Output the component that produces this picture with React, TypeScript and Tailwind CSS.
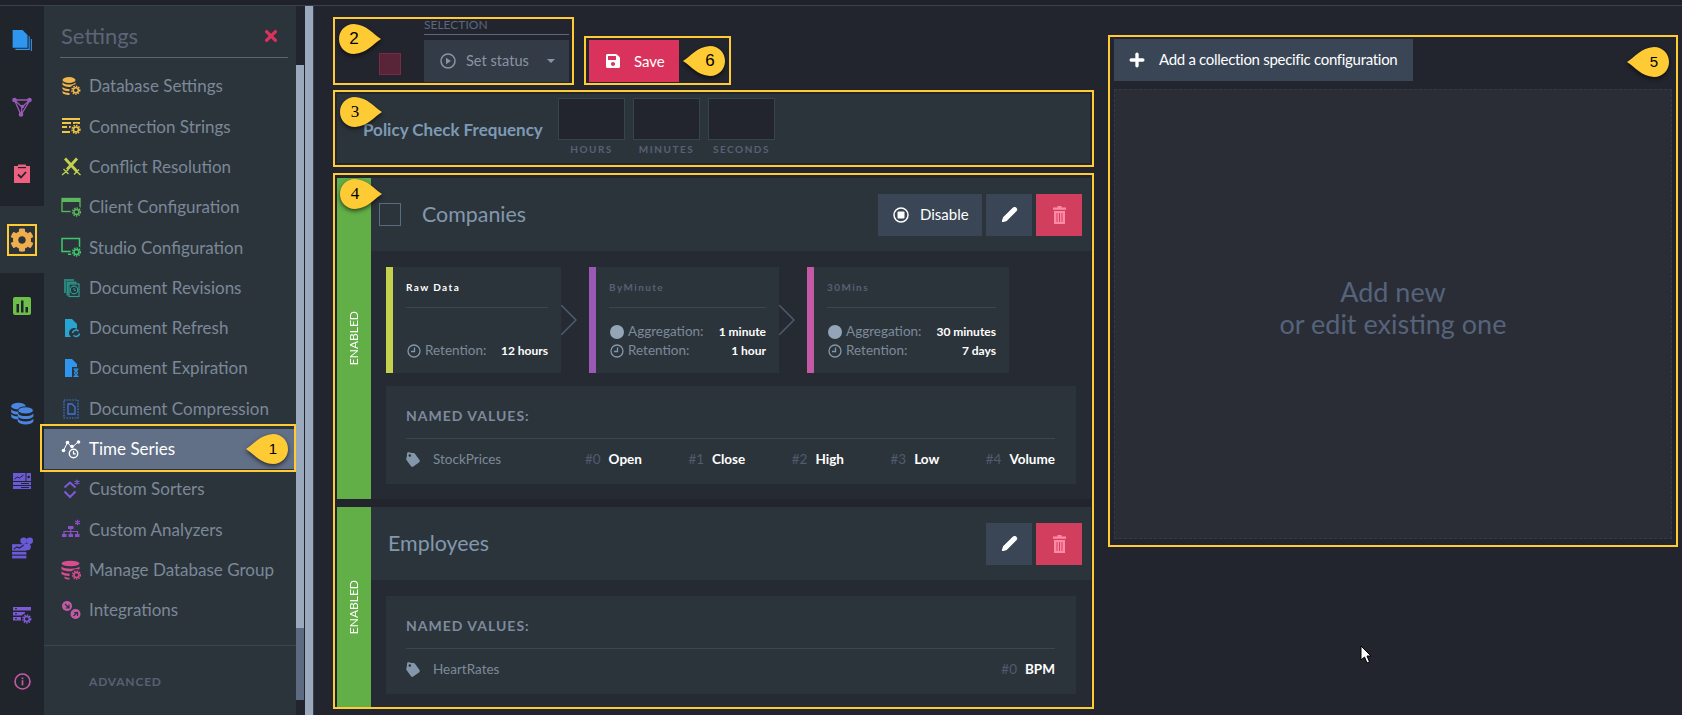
import React from 'react';
import { Plus, Pencil } from 'lucide-react';
import { FaCog, FaSave, FaTag, FaTimes } from 'react-icons/fa';

type IconProps = { className?: string };

// tiny gear used on the corner of several menu icons
const Gear = ({ x, y, cut = '#2c343b' }: { x: number; y: number; cut?: string }) => (
  <g>
    <circle cx={x} cy={y} r={6} fill={cut} />
    <circle cx={x} cy={y} r={3.9} fill="none" stroke="currentColor" strokeWidth={1.5} strokeDasharray="1.5 1.06" />
    <circle cx={x} cy={y} r={2.5} fill="none" stroke="currentColor" strokeWidth={1.5} />
  </g>
);

const Svg = ({ className, children, size = 20 }: IconProps & { children: React.ReactNode; size?: number }) => (
  <svg viewBox="0 0 20 20" width={size} height={size} fill="currentColor" className={className}>
    {children}
  </svg>
);

const DbSettingsIcon = ({ className }: IconProps) => (
  <Svg className={className}>
    <ellipse cx="8" cy="4" rx="6.5" ry="3" />
    <path d="M1.5 6.2c1 1.6 3.5 2.4 6.5 2.4s5.500-.8 6.500-2.400v2.600c-1 1.300-3.500 2.200-6.500 2.200S2.500 10 1.500 8.800z" />
    <path d="M1.500 11c1.400 1.400 4 2 7 2v2.300c-3.300 0-5.800-.8-7-2.200zM1.500 14.900c1.400 1.300 4 1.900 7 2V19c-3.500 0-7-1-7-2.500z" />
    <Gear x={14.8} y={14.2} />
  </Svg>
);
const ConnectionIcon = ({ className }: IconProps) => (
  <Svg className={className}>
    <rect x="1" y="2" width="18" height="2" />
    <rect x="1" y="6" width="9" height="2" />
    <rect x="12" y="6" width="7" height="2" />
    <rect x="1" y="10" width="5" height="2" />
    <rect x="8" y="10" width="3" height="2" />
    <rect x="1" y="15" width="8" height="2" />
    <Gear x={15} y={13.500} />
  </Svg>
);
const ConflictIcon = ({ className }: IconProps) => (
  <Svg className={className}>
    <path d="M4 1.500l12 13" stroke="currentColor" strokeWidth="2.800" fill="none" />
    <path d="M16 1.500L6 12.500" stroke="currentColor" strokeWidth="2.800" fill="none" />
    <path d="M1 18l6-5M2.500 12l5 5M19.500 18l-5-4.500M18 12.500l-5 5" stroke="currentColor" strokeWidth="1.300" fill="none" />
  </Svg>
);
const ClientIcon = ({ className }: IconProps) => (
  <Svg className={className}>
    <rect x="1" y="1.500" width="18" height="13" fill="none" stroke="currentColor" strokeWidth="1.300" />
    <rect x="1" y="1.500" width="18" height="3.500" />
    <Gear x={15.500} y={15} />
  </Svg>
);
const StudioIcon = ({ className }: IconProps) => (
  <Svg className={className}>
    <rect x="1" y="1.500" width="17.500" height="13" fill="none" stroke="currentColor" strokeWidth="1.500" />
    <rect x="7" y="16.500" width="5" height="1.500" />
    <Gear x={15.500} y={15} />
  </Svg>
);
const RevisionsIcon = ({ className }: IconProps) => (
  <Svg className={className}>
    <path d="M3 1h10v2H5v12H3z" opacity=".75" />
    <path d="M5.500 3.500h10v2h-8v12h-2z" opacity=".9" />
    <rect x="8" y="6" width="10" height="12.500" fill="none" stroke="currentColor" strokeWidth="1.200" />
    <circle cx="13" cy="12" r="3.800" fill="none" stroke="currentColor" strokeWidth="1.200" />
    <path d="M13 10v2.300h2" fill="none" stroke="currentColor" strokeWidth="1" />
  </Svg>
);
const RefreshIcon = ({ className }: IconProps) => (
  <Svg className={className}>
    <path d="M4 1h7l5 5v5a5 5 0 0 0-6 8H4z" />
    <path d="M11.500 15a3.500 3.500 0 0 1 6-1.800M18.500 15.500a3.500 3.500 0 0 1-6 1.800" fill="none" stroke="currentColor" strokeWidth="1.500" />
  </Svg>
);
const ExpirationIcon = ({ className }: IconProps) => (
  <Svg className={className}>
    <path d="M4 1h7l5 5v3h-5v10H4z" />
    <path d="M12.500 11h5M12.500 18.500h5M13.500 11c0 2.500 3 2.500 3 4s-3 1.500-3 3.500M16.500 11c0 2.500-3 2.500-3 4s3 1.500 3 3.500" fill="none" stroke="currentColor" strokeWidth="1.200" />
  </Svg>
);
const CompressionIcon = ({ className }: IconProps) => (
  <Svg className={className}>
    <rect x="3" y="1" width="14" height="18" fill="none" stroke="currentColor" strokeWidth="1.200" strokeDasharray="1.600 1.200" />
    <path d="M7 5h4l3 3v7H7z" fill="none" stroke="currentColor" strokeWidth="1.300" />
  </Svg>
);
const TimeSeriesIcon = ({ className }: IconProps) => (
  <Svg className={className}>
    <path d="M2.500 11.500L6.500 3.500L11 8.500L17 3" fill="none" stroke="currentColor" strokeWidth="1" />
    <circle cx="2.500" cy="11.500" r="1.800" />
    <circle cx="6.500" cy="3.500" r="1.800" />
    <circle cx="11" cy="7.500" r="1.800" />
    <circle cx="17.500" cy="3" r="1.800" />
    <circle cx="12.500" cy="14.500" r="4.200" fill="none" stroke="currentColor" strokeWidth="1.400" />
    <path d="M12.500 12v2.800h2.200" fill="none" stroke="currentColor" strokeWidth="1.200" />
  </Svg>
);
const SortersIcon = ({ className }: IconProps) => (
  <Svg className={className}>
    <path d="M3.500 8.500l5.500-5 5.500 5M3.500 12.500l5.500 5.500 5.500-5.500" fill="none" stroke="currentColor" strokeWidth="2" />
    <path d="M16 .8v5M13.600 2l4.800 2.700M13.600 4.700L18.400 2" stroke="currentColor" strokeWidth="1.200" />
  </Svg>
);
const AnalyzersIcon = ({ className }: IconProps) => (
  <Svg className={className}>
    <rect x="7" y="7" width="5.500" height="3" />
    <rect x="1" y="15" width="4.500" height="3" />
    <rect x="7.500" y="15" width="4.500" height="3" />
    <rect x="14" y="15" width="4.500" height="3" />
    <path d="M3 15v-2.500h13.500V15M9.700 10v5" fill="none" stroke="currentColor" strokeWidth="1.200" />
    <path d="M16.500 .8v5.400M14 2l5 3M14 5l5-3" stroke="currentColor" strokeWidth="1.200" />
  </Svg>
);
const GroupIcon = ({ className }: IconProps) => (
  <Svg className={className}>
    <ellipse cx="9.500" cy="3.500" rx="9" ry="2.800" />
    <path d="M.5 6.500c1.500 1.500 5 2.200 9 2.200s7.500-.7 9-2.200v2.700c-1.500 1.400-5 2.100-9 2.100s-7.500-.7-9-2.100zM.5 11.500c1.500 1.300 4 2 8 2.100v2.500c-4 0-6.500-.8-8-2zM3.500 16.500c1.400.8 3 1.200 5 1.300V19.500c-2.500 0-4.200-.5-5-1.300z" />
    <Gear x={15.500} y={15} />
  </Svg>
);
const IntegrationsIcon = ({ className }: IconProps) => (
  <Svg className={className}>
    <circle cx="6" cy="6" r="5" />
    <circle cx="14.500" cy="14" r="5" />
    <path d="M4 4l4 4M4.500 8h3.500V4.500" fill="none" stroke="#2c343b" strokeWidth="1.200" />
    <path d="M16.500 12l-4 4M16 15.500h-3.500V12" fill="none" stroke="#2c343b" strokeWidth="1.200" transform="rotate(180 14.500 14)" />
  </Svg>
);

// rail icons
const DocsIcon = ({ className }: IconProps) => (
  <Svg className={className} size={22}>
    <path d="M1.500 1h9l4.500 4.500V17H1.500z" />
    <path d="M16.500 6.500V18.500H4M18.500 9v11.500H7" fill="none" stroke="currentColor" strokeWidth="1" />
  </Svg>
);
const GraphIcon = ({ className }: IconProps) => (
  <Svg className={className} size={20}>
    <path d="M2.500 3L18 3M2.500 3L9 18M18 3L9 18M2.500 3L10 10M18 3L10 10M9 18l1-8" fill="none" stroke="currentColor" strokeWidth="1.300" />
    <circle cx="2.500" cy="3" r="2.300" />
    <circle cx="17.500" cy="3" r="2.300" />
    <circle cx="9" cy="17.500" r="2.300" />
    <circle cx="10.500" cy="9.500" r="1.800" />
  </Svg>
);
const ClipboardIcon = ({ className }: IconProps) => (
  <Svg className={className} size={20}>
    <path d="M2 3h4V1.500h8V3h4v17H2z" />
    <path d="M6 11.500l3 3 5-5.500" fill="none" stroke="#20242b" strokeWidth="1.800" />
    <rect x="6" y="4" width="8" height="1.200" fill="#20242b" />
  </Svg>
);
const ChartIcon = ({ className }: IconProps) => (
  <Svg className={className} size={20}>
    <rect x="1" y="1" width="18" height="18" rx="2" />
    <rect x="4.500" y="8" width="2.500" height="8.500" fill="#20242b" />
    <rect x="9" y="4.500" width="2.500" height="12" fill="#20242b" />
    <rect x="13.500" y="11" width="2.500" height="5.500" fill="#20242b" />
  </Svg>
);
const DatabasesIcon = ({ className }: IconProps) => (
  <Svg className={className} size={24}>
    <ellipse cx="7" cy="3.500" rx="6" ry="2.800" />
    <path d="M1 6c1 1.300 3 2 6 2v2.500c-3 0-5-.8-6-2zM1 10c1 1.300 3 2 6 2v2.500c-3 0-5-.8-6-2z" />
    <ellipse cx="13" cy="7" rx="6.500" ry="3" stroke="#20242b" strokeWidth=".8" />
    <path d="M6.500 9.500c1 1.300 3.500 2.200 6.500 2.200s5.500-.9 6.500-2.200V12c-1 1.300-3.500 2.200-6.500 2.200S7.500 13.300 6.500 12zM6.500 14c1 1.300 3.500 2.200 6.500 2.200s5.500-.9 6.500-2.200v2.500c-1 1.300-3.500 2.200-6.500 2.200s-5.500-.9-6.500-2.200z" />
  </Svg>
);
const DashboardIcon = ({ className }: IconProps) => (
  <Svg className={className} size={20}>
    <rect x="1" y="2" width="12.500" height="8" />
    <rect x="14.500" y="2" width="4.500" height="8" />
    <rect x="1" y="11" width="18" height="3" />
    <rect x="1" y="15" width="18" height="3" />
    <path d="M2.500 8l3-2 2 1 4-3" fill="none" stroke="#20242b" strokeWidth="1" />
    <circle cx="16.700" cy="6" r="1.300" fill="#20242b" />
    <rect x="9" y="12" width="8" height="1" fill="#20242b" />
    <rect x="9" y="16" width="8" height="1" fill="#20242b" />
  </Svg>
);
const ClusterIcon = ({ className }: IconProps) => (
  <Svg className={className} size={22}>
    <rect x="1" y="6.500" width="13" height="6" />
    <rect x="1" y="13.500" width="13" height="2.500" />
    <rect x="1" y="17" width="13" height="2.500" />
    <path d="M2.500 11l3-2 2 1 4-2.500" fill="none" stroke="#20242b" strokeWidth="1" />
    <circle cx="11.500" cy="3.500" r="3" />
    <circle cx="17" cy="3.500" r="3" />
    <circle cx="15" cy="9" r="3" />
  </Svg>
);
const ServerConfigIcon = ({ className }: IconProps) => (
  <Svg className={className} size={20}>
    <rect x="1" y="2" width="18" height="3.500" />
    <rect x="1" y="7" width="12" height="3.500" />
    <rect x="1" y="12" width="9" height="3.500" />
    <Gear x={14.800} y={14} cut="#20242b" />
    <rect x="3" y="3.200" width="2" height="1" fill="#20242b" />
    <rect x="3" y="8.200" width="2" height="1" fill="#20242b" />
    <rect x="3" y="13.200" width="2" height="1" fill="#20242b" />
  </Svg>
);
const InfoIcon = ({ className }: IconProps) => (
  <Svg className={className} size={17}>
    <circle cx="10" cy="10" r="8.800" fill="none" stroke="currentColor" strokeWidth="1.900" />
    <rect x="9" y="8.500" width="2" height="6" />
    <rect x="9" y="5.300" width="2" height="2" />
  </Svg>
);
const ClockIcon = () => (
  <svg viewBox="0 0 14 14" width={14} height={14} className="shrink-0 text-[#8496a9]">
    <circle cx="7" cy="7" r="6" fill="none" stroke="currentColor" strokeWidth="1.300" />
    <path d="M7.500 3.500v4H4" fill="none" stroke="currentColor" strokeWidth="1.300" />
  </svg>
);
const TrashIcon = () => (
  <svg viewBox="0 0 13 18" width={13} height={18} fill="currentColor">
    <path d="M4.500 0h4v1.500H13v2.200H0V1.500h4.500z" />
    <path d="M1 5h11v13H1zM3.500 7v9h1V7zM6 7v9h1V7zM8.500 7v9h1V7z" fillRule="evenodd" />
  </svg>
);

// numbered yellow callout laid over the screenshot
const Callout = ({ n, className, flip, numClass }: { n: number; className: string; flip?: boolean; numClass?: string }) => (
  <div className={`absolute z-20 h-[30px] w-[42px] ${className}`}>
    <svg viewBox="0 0 42 30" width={42} height={30} className={`drop-shadow-[0_2px_2px_rgba(0,0,0,0.6)] ${flip ? '-scale-x-100' : ''}`}>
      <path d="M0 15C8 10 14 1 27 0c9 0 15 7 15 15s-6 15-15 15C14 29 8 20 0 15z" fill="#fecb35" />
    </svg>
    <span className={`absolute top-0 flex h-[30px] w-[30px] items-center justify-center text-black ${flip ? 'left-0' : 'right-0'} ${numClass ?? "font-['Liberation_Sans'] text-[15px]"}`}>
      {n}
    </span>
  </div>
);

const rail = [
  { icon: DocsIcon, color: 'text-[#2f96f0]' },
  { icon: GraphIcon, color: 'text-[#9b59b6]' },
  { icon: ClipboardIcon, color: 'text-[#ee5f80]' },
];
const railBottom = [
  { icon: DatabasesIcon, color: 'text-[#4a85e0]' },
  { icon: DashboardIcon, color: 'text-[#6a5ad8]' },
  { icon: ClusterIcon, color: 'text-[#6a5ad8]' },
  { icon: ServerConfigIcon, color: 'text-[#7e5bd6]' },
  { icon: InfoIcon, color: 'text-[#c45aa6]' },
];

const menu = [
  { label: 'Database Settings', icon: DbSettingsIcon, color: 'text-[#f0b64c]' },
  { label: 'Connection Strings', icon: ConnectionIcon, color: 'text-[#f3c544]' },
  { label: 'Conflict Resolution', icon: ConflictIcon, color: 'text-[#c4d04e]' },
  { label: 'Client Configuration', icon: ClientIcon, color: 'text-[#5cb85c]' },
  { label: 'Studio Configuration', icon: StudioIcon, color: 'text-[#3fc76c]' },
  { label: 'Document Revisions', icon: RevisionsIcon, color: 'text-[#2a9d90]' },
  { label: 'Document Refresh', icon: RefreshIcon, color: 'text-[#27a5d0]' },
  { label: 'Document Expiration', icon: ExpirationIcon, color: 'text-[#2f96f0]' },
  { label: 'Document Compression', icon: CompressionIcon, color: 'text-[#3f73d8]' },
  { label: 'Time Series', icon: TimeSeriesIcon, color: 'text-white', active: true },
  { label: 'Custom Sorters', icon: SortersIcon, color: 'text-[#7e5bd6]' },
  { label: 'Custom Analyzers', icon: AnalyzersIcon, color: 'text-[#8a50c8]' },
  { label: 'Manage Database Group', icon: GroupIcon, color: 'text-[#d84d8f]' },
  { label: 'Integrations', icon: IntegrationsIcon, color: 'text-[#c45aa6]' },
];

const Sidebar = () => (
  <aside className="flex h-full w-[252px] shrink-0 flex-col bg-[#2c343b]">
    <div className="ml-4 mr-2 flex h-[52px] items-center justify-between border-b border-[#5b6577] pl-[1px] pr-2 pt-[8px]">
      <span className="text-[22px] leading-none text-[#5b6577]">Settings</span>
      <FaTimes className="h-[18px] w-[18px] text-[#d9325c]" />
    </div>
    <nav className="mt-[8px]">
      {menu.map((item) => {
        const Icon = item.icon;
        return (
          <div
            key={item.label}
            className={`flex h-[40.3px] items-center gap-2 pl-[17px] text-[17px] ${
              item.active ? 'bg-[#616f87] text-white' : 'text-[#7b8898]'
            }`}
          >
            <Icon className={`shrink-0 ${item.color}`} />
            {item.label}
          </div>
        );
      })}
    </nav>
    <div className="mt-[15px] border-t border-[#3a4553] pl-[45px] pt-[28px] text-[12px] font-bold leading-4 tracking-[0.8px] text-[#566174]">
      ADVANCED
    </div>
  </aside>
);

const Rail = () => (
  <div className="flex h-full w-[44px] shrink-0 flex-col items-center bg-[#20242b] pt-[1px]">
    {rail.map(({ icon: Icon, color }, i) => (
      <div key={i} className="flex h-[67px] w-full items-center justify-center">
        <Icon className={color} />
      </div>
    ))}
    <div className="flex h-[67px] w-full items-center justify-center bg-[#2c343b]">
      <div className="flex h-[32px] w-[30px] items-center justify-center border-2 border-[#fecb35]">
        <FaCog className="h-[24px] w-[24px] text-[#f0ad4e]" />
      </div>
    </div>
    <div className="flex h-[67px] w-full items-center justify-center">
      <ChartIcon className="text-[#6cc04a]" />
    </div>
    <div className="h-[41px]" />
    {railBottom.map(({ icon: Icon, color }, i) => (
      <div key={i} className="flex h-[67px] w-full shrink-0 items-center justify-center">
        <Icon className={color} />
      </div>
    ))}
  </div>
);

const Card = ({
  title,
  stripe,
  width,
  raw,
  aggregation,
  retention,
}: {
  title: string;
  stripe: string;
  width: string;
  raw?: boolean;
  aggregation?: string;
  retention: string;
}) => (
  <div className={`flex h-[106px] shrink-0 bg-[#2c343b] ${width}`}>
    <div className={`w-[7px] shrink-0 ${stripe}`} />
    <div className="min-w-0 flex-1 pl-[13px] pr-[13px]">
      <div
        className={`flex h-[41px] items-center border-b border-[#3c4653] text-[10px] font-bold tracking-[1.4px] ${
          raw ? 'text-white' : 'text-[#566174]'
        }`}
      >
        {title}
      </div>
      <div className="pt-[14px] text-[13.5px] text-[#7c8a9a]">
        <div className="flex h-[19px] items-center gap-1 pl-[1px]">
          {aggregation && (
            <>
              <span className="h-[14px] w-[14px] shrink-0 rounded-full bg-[#94a5b8]" />
              Aggregation:
              <span className="ml-auto text-[12px] font-bold text-white">{aggregation}</span>
            </>
          )}
        </div>
        <div className="flex h-[19px] items-center gap-1 pl-[1px]">
          <ClockIcon />
          Retention:
          <span className="ml-auto text-[12px] font-bold text-white">{retention}</span>
        </div>
      </div>
    </div>
  </div>
);

const Arrow = () => (
  <div className="flex w-[28px] shrink-0 items-center">
    <svg viewBox="0 0 16 30" width={16} height={30} fill="none" stroke="#4f5b6e" strokeWidth="1.500">
      <path d="M0 0l15 15L0 30" />
    </svg>
  </div>
);

const NamedValues = ({ series, values }: { series: string; values: string[] }) => (
  <div className="ml-[15px] mr-[15px] h-[98px] bg-[#2c343b] pl-[20px] pr-[21px]">
    <div className="flex h-[53px] items-end border-b border-[#3c4653] pb-[14px] text-[14px] font-bold leading-4 tracking-[1px] text-[#7d8a9c]">
      NAMED VALUES:
    </div>
    <div className="flex h-[41px] items-center text-[13.5px]">
      <FaTag className="h-[14px] w-[14px] rotate-[10deg] text-[#8496a9]" />
      <span className="ml-[13px] text-[#7c8a9a]">{series}</span>
      <div className="ml-auto flex gap-[46.5px]">
        {values.map((v, i) => (
          <span key={v} className="flex gap-[8px]">
            <span className="text-[#4f5b6e]">#{i}</span>
            <span className="font-bold text-white">{v}</span>
          </span>
        ))}
      </div>
    </div>
  </div>
);

const EnabledBar = () => (
  <div className="flex w-[34px] shrink-0 items-center justify-center bg-[#62ae47]">
    <span className="rotate-180 text-[12px] text-white [writing-mode:vertical-rl]">ENABLED</span>
  </div>
);

const RowActions = () => (
  <div className="ml-auto mr-[9px] flex gap-1">
    <button className="flex h-[42px] w-[46px] items-center justify-center bg-[#3a4656] text-white">
      <Pencil className="h-[17px] w-[17px]" fill="white" strokeWidth={1.500} />
    </button>
    <button className="flex h-[42px] w-[46px] items-center justify-center bg-[#d23f5e] text-[#ff8aa5]">
      <TrashIcon />
    </button>
  </div>
);

const App = () => (
  <div className="relative h-[715px] w-[1682px] overflow-hidden bg-[#22252d] font-['Lato',sans-serif]">
    <div className="flex h-[6px] border-b border-[#3a4250] bg-[#1f2229]" />
    <div className="flex h-[709px]">
      <Rail />
      <Sidebar />
      <div className="flex shrink-0 flex-col pt-[59px]">
        <div className="h-[563px] w-[8px] bg-[#9aa9bb]" />
        <div className="h-[72px] w-[8px] bg-[#5d6a80]" />
      </div>
      <div className="w-[1px] shrink-0 bg-[#22252d]" />
      <div className="w-[8px] shrink-0 bg-[#9aa9bb]" />

      <main className="flex flex-1 gap-[14px] border-l border-[#3a4250] pl-[19px] pt-[11px]">
        <div className="w-[761px] shrink-0">
          <div className="flex items-end gap-[10px]">
            {/* Selection */}
            <div className="flex h-[68px] w-[241px] border-2 border-[#fecb35] pl-[44px]">
              <div className="mt-[34px] h-[22px] w-[22px] border border-[#7a2a42] bg-[#5a2438]" />
              <div className="ml-[23px] w-[145px]">
                <div className="h-[16px] border-b border-[#5b6880] text-[12px] leading-[12px] text-[#5b6880]">SELECTION</div>
                <div className="mt-[5px] flex h-[42px] items-center bg-[#333b47] pl-4 pr-[14px] text-[14.6px] text-[#8a94a3]">
                  <svg viewBox="0 0 16 16" width={16} height={16} fill="none" stroke="currentColor" strokeWidth="1.500">
                    <circle cx="8" cy="8" r="7" />
                    <path d="M6 4.800l5 3.200-5 3.200z" fill="currentColor" stroke="none" />
                  </svg>
                  <span className="ml-[10px]">Set status</span>
                  <span className="ml-auto h-0 w-0 border-x-[4.500px] border-t-[4px] border-x-transparent border-t-[#8a94a3]" />
                </div>
              </div>
            </div>
            {/* Save */}
            <div className="h-[49px] w-[147px] border-2 border-[#fecb35] pl-[3px] pt-[2px]">
              <button className="flex h-[42px] w-[90px] items-center bg-[#d9325c] pl-4 text-[15px] text-white">
                <FaSave className="h-[16px] w-[16px]" />
                <span className="ml-[13px]">Save</span>
              </button>
            </div>
          </div>

          {/* Policy check frequency */}
          <div className="mt-[5px] h-[77px] border-2 border-[#fecb35] p-[2px]">
            <div className="flex h-[69px] bg-[#2c343b] pt-[4px]">
              <div className="w-[221px] shrink-0 pl-[26px] pt-[22px] text-[17px] font-bold leading-5 text-[#7d9ab5]">
                Policy Check Frequency
              </div>
              <div className="flex gap-[8px]">
                {['HOURS', 'MINUTES', 'SECONDS'].map((l) => (
                  <div key={l} className="w-[67px]">
                    <div className="h-[42px] border border-[#39424f] bg-[#22252d]" />
                    <div className="mt-[1px] text-center text-[10px] font-bold leading-4 tracking-[1.500px] text-[#566174]">{l}</div>
                  </div>
                ))}
              </div>
            </div>
          </div>

          {/* Collections */}
          <div className="mt-[6px] flex h-[536px] flex-col gap-[8px] border-2 border-[#fecb35] pl-[2px] pr-[1px] pt-[3px]">
            <div className="flex h-[321px] shrink-0">
              <EnabledBar />
              <div className="flex-1 bg-[#262b33]">
                <div className="flex h-[73px] items-center bg-[#2c343b] pl-[8px]">
                  <div className="h-[23px] w-[22px] border border-[#5a6a80]" />
                  <span className="ml-[21px] text-[21.4px] text-[#8298ae]">Companies</span>
                  <button className="ml-auto flex h-[42px] w-[104px] items-center bg-[#3a4656] pl-[15px] text-[15px] text-white">
                    <svg viewBox="0 0 16 16" width={16} height={16} fill="none" stroke="currentColor" strokeWidth="1.500">
                      <circle cx="8" cy="8" r="7" />
                      <rect x="4.500" y="4.500" width="7" height="7" rx="1" fill="currentColor" stroke="none" />
                    </svg>
                    <span className="ml-[11px]">Disable</span>
                  </button>
                  <div className="ml-1">
                    <RowActions />
                  </div>
                </div>
                <div className="flex pl-[15px] pt-[16px]">
                  <Card title="Raw Data" stripe="bg-[#c4d04e]" width="w-[175px]" raw retention="12 hours" />
                  <Arrow />
                  <Card title="ByMinute" stripe="bg-[#9b59b6]" width="w-[190px]" aggregation="1 minute" retention="1 hour" />
                  <Arrow />
                  <Card title="30Mins" stripe="bg-[#c45aa6]" width="w-[202px]" aggregation="30 minutes" retention="7 days" />
                </div>
                <div className="mt-[13px]">
                  <NamedValues series="StockPrices" values={['Open', 'Close', 'High', 'Low', 'Volume']} />
                </div>
              </div>
            </div>
            <div className="flex h-[200px] shrink-0">
              <EnabledBar />
              <div className="flex-1 bg-[#262b33]">
                <div className="flex h-[73px] items-center bg-[#2c343b] pl-[17px]">
                  <span className="text-[21.4px] text-[#8298ae]">Employees</span>
                  <RowActions />
                </div>
                <div className="mt-[16px]">
                  <NamedValues series="HeartRates" values={['BPM']} />
                </div>
              </div>
            </div>
          </div>
        </div>

        {/* Collection specific configuration */}
        <div className="mt-[18px] flex h-[512px] w-[570px] shrink-0 flex-col border-2 border-[#fecb35] px-[4px] pb-[6px] pt-[2px]">
          <button className="flex h-[42px] w-[299px] shrink-0 items-center whitespace-nowrap bg-[#3a4656] pb-[1px] pl-[13px] text-[15px] text-white">
            <Plus className="h-[20px] w-[20px] shrink-0" strokeWidth={4} />
            <span className="ml-[12px] tracking-[-0.3px]">Add a collection specific configuration</span>
          </button>
          <div className="mt-[8px] flex flex-1 flex-col items-center justify-start border border-dashed border-[#343a45] bg-[#2a2d35] pt-[186px] text-[27px] leading-[32px] text-[#55637b]">
            <span>Add new</span>
            <span>or edit existing one</span>
          </div>
        </div>
      </main>
    </div>

    <Callout n={1} className="left-[246px] top-[434px]" />
    <Callout n={2} flip className="left-[339px] top-[24px]" numClass="font-['Liberation_Sans'] text-[17px]" />
    <Callout n={3} flip className="left-[340px] top-[97px]" numClass="font-['Liberation_Serif'] text-[17px]" />
    <Callout n={4} flip className="left-[340px] top-[179px]" numClass="font-['Liberation_Serif'] text-[17px]" />
    <Callout n={5} className="left-[1627px] top-[47px]" />
    <Callout n={6} className="left-[683px] top-[46px]" numClass="font-['Liberation_Sans'] text-[17px]" />

    {/* Time Series highlight */}
    <div className="pointer-events-none absolute left-[40px] top-[424px] h-[48px] w-[256px] border-2 border-[#fecb35]" />

    {/* mouse pointer */}
    <svg viewBox="0 0 12 19" width={12} height={19} className="absolute left-[1360px] top-[645px]">
      <path d="M1 1v14l3.500-3 2.500 6 2.500-1-2.500-6H11z" fill="white" stroke="black" strokeWidth="1" />
    </svg>
  </div>
);

export default App;
